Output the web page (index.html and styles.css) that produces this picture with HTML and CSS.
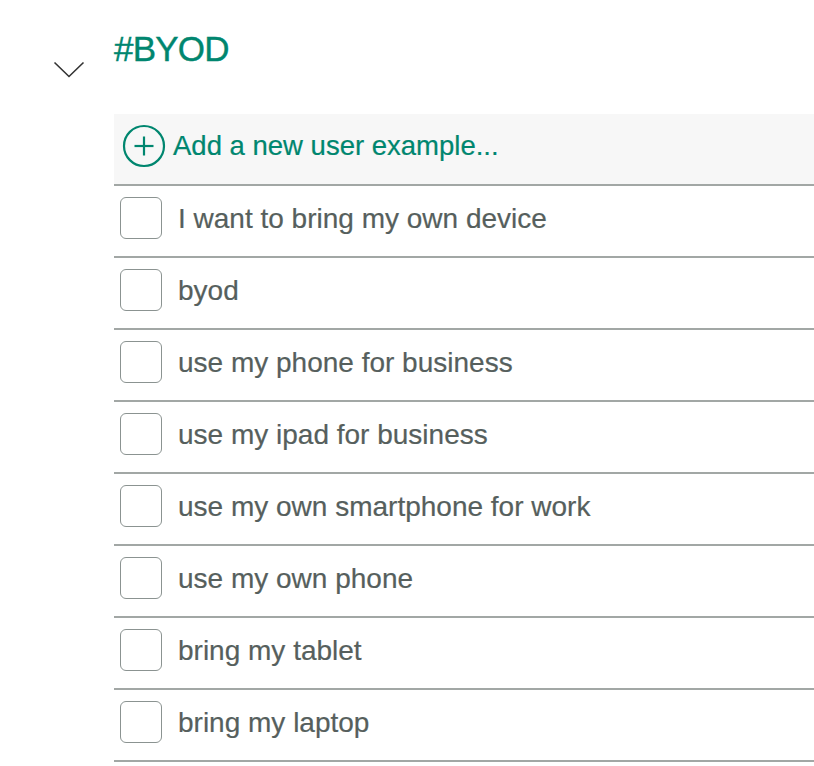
FILE: index.html
```html
<!DOCTYPE html>
<html>
<head>
<meta charset="utf-8">
<link rel="stylesheet" href="styles.css">
</head>
<body>
<div class="intent">
  <div class="toggle">
    <svg class="chevron" width="32" height="18" viewBox="0 0 32 18"><polyline points="1.5,1.5 16,15.5 30.5,1.5" fill="none" stroke="#333" stroke-width="1.6"/></svg>
  </div>
  <div class="content">
    <h1 class="title">#BYOD</h1>
    <ul class="examples">
      <li class="add-row">
        <svg class="plus" width="44" height="44" viewBox="0 0 44 44"><circle cx="22" cy="22" r="20" fill="none" stroke="#00866f" stroke-width="2.2"/><line x1="12.5" y1="22" x2="31.5" y2="22" stroke="#00866f" stroke-width="2.2"/><line x1="22" y1="12.5" x2="22" y2="31.5" stroke="#00866f" stroke-width="2.2"/></svg>
        <span class="add-label">Add a new user example...</span>
      </li>
      <li class="row"><span class="box"></span><span class="label">I want to bring my own device</span></li>
      <li class="row"><span class="box"></span><span class="label">byod</span></li>
      <li class="row"><span class="box"></span><span class="label">use my phone for business</span></li>
      <li class="row"><span class="box"></span><span class="label">use my ipad for business</span></li>
      <li class="row"><span class="box"></span><span class="label">use my own smartphone for work</span></li>
      <li class="row"><span class="box"></span><span class="label">use my own phone</span></li>
      <li class="row"><span class="box"></span><span class="label">bring my tablet</span></li>
      <li class="row"><span class="box"></span><span class="label">bring my laptop</span></li>
    </ul>
  </div>
</div>
</body>
</html>
```

FILE: styles.css
```css
html, body {
  margin: 0;
  padding: 0;
  background: #ffffff;
  font-family: "Liberation Sans", Arial, sans-serif;
}

.intent {
  display: flex;
}

.toggle {
  width: 114px;
  flex: none;
  padding-top: 61px;
  padding-left: 53px;
  box-sizing: border-box;
}

.chevron {
  display: block;
}

.content {
  flex: 1;
}

.title {
  margin: 0;
  padding-top: 29px;
  height: 114px;
  box-sizing: border-box;
  font-size: 35px;
  line-height: 40px;
  font-weight: normal;
  color: #00866f;
  letter-spacing: -0.8px;
  -webkit-text-stroke: 0.4px #00866f;
}

.examples {
  list-style: none;
  margin: 0;
  padding: 0;
}

.add-row {
  display: flex;
  align-items: center;
  height: 70px;
  background: #f7f7f7;
  border-bottom: 2px solid #a2a7a5;
  padding-left: 8px;
  gap: 7px;
}

.plus {
  display: block;
  flex: none;
  margin-top: -6px;
}

.add-label {
  font-size: 27.5px;
  color: #00866f;
  margin-top: -6px;
  -webkit-text-stroke: 0.2px #00866f;
}

.row {
  display: flex;
  align-items: center;
  height: 70px;
  border-bottom: 2px solid #a2a7a5;
  padding-left: 6px;
  gap: 16px;
}

.box {
  flex: none;
  width: 40px;
  height: 40px;
  border: 1.5px solid #8b9391;
  border-radius: 6px;
  margin-top: -6px;
}

.label {
  font-size: 28px;
  color: #565f5d;
  margin-top: -5px;
  -webkit-text-stroke: 0.2px #565f5d;
}
```
